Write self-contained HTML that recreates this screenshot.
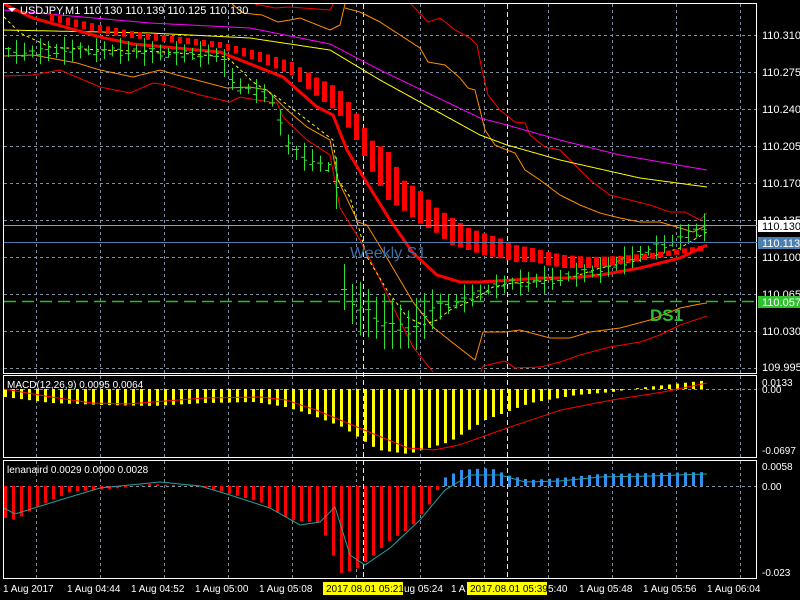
<!DOCTYPE html>
<html><head><meta charset="utf-8"><style>
html,body{margin:0;padding:0;background:#000;width:800px;height:600px;overflow:hidden}
svg{display:block}
text{font-family:"Liberation Sans",sans-serif;font-size:11px}
</style></head><body>
<svg id="s" width="800" height="600" xmlns="http://www.w3.org/2000/svg">
<rect width="800" height="600" fill="#000"/>
<g id="grid"></g>
<g id="plot"></g>
<rect x="3.5" y="3.5" width="753" height="370" fill="none" stroke="#fff"/>
<rect x="3.5" y="375.5" width="753" height="82" fill="none" stroke="#fff"/>
<rect x="3.5" y="460.5" width="753" height="118" fill="none" stroke="#fff"/>
<line x1="4" y1="225.5" x2="757" y2="225.5" stroke="#9a9a9a"/>
<line x1="4" y1="242.5" x2="757" y2="242.5" stroke="#4a7fb0"/>
<line x1="4" y1="301.5" x2="757" y2="301.5" stroke="#20c020" stroke-width="1.5" stroke-dasharray="12,6"/>
<text x="350" y="258" fill="#3a6fa8" style="font-size:16px">Weekly S1</text>
<text x="650" y="321" fill="#30c030" style="font-size:17px;font-weight:bold">DS1</text>
<path d="M8 8 L16 8 L12 12 Z" fill="#fff"/>
<text x="20" y="14" fill="#fff">USDJPY,M1  110.130 110.139 110.125 110.130</text>
<text x="7" y="388" fill="#fff" style="font-size:10px">MACD(12,26,9) 0.0095 0.0064</text>
<text x="7" y="473" fill="#fff" style="font-size:10px">lenanaird 0.0029 0.0000 0.0028</text>
<g fill="#fff">
<text x="762" y="39">110.310</text><text x="762" y="76">110.275</text><text x="762" y="113">110.240</text>
<text x="762" y="150">110.205</text><text x="762" y="187">110.170</text><text x="762" y="224">110.135</text>
<text x="762" y="261">110.100</text><text x="762" y="298">110.065</text><text x="762" y="335">110.030</text>
<text x="762" y="371">109.995</text>
<text x="762" y="386" style="font-size:10px">0.0133</text><text x="762" y="393" style="font-size:10px">0.00</text>
<text x="762" y="454" style="font-size:10px">-0.0697</text>
<text x="762" y="470" style="font-size:10px">0.0058</text><text x="762" y="490" style="font-size:10px">0.00</text>
<text x="762" y="576" style="font-size:10px">-0.023</text>
</g>
<rect x="758" y="220" width="42" height="12" fill="#fff"/><text x="762" y="230" fill="#000">110.130</text>
<rect x="758" y="237" width="42" height="12" fill="#4a7fb0"/><text x="762" y="247" fill="#fff">110.113</text>
<rect x="758" y="296" width="42" height="12" fill="#30c030"/><text x="762" y="306" fill="#fff">110.057</text>
<g fill="#fff">
<text x="3" y="592" style="font-size:10px">1 Aug 2017</text>
<text x="67" y="592" style="font-size:10px">1 Aug 04:44</text>
<text x="131" y="592" style="font-size:10px">1 Aug 04:52</text>
<text x="195" y="592" style="font-size:10px">1 Aug 05:00</text>
<text x="259" y="592" style="font-size:10px">1 Aug 05:08</text>
<text x="404" y="592" style="font-size:10px">ug 05:24</text>
<text x="451" y="592" style="font-size:10px">1 A</text>
<text x="548" y="592" style="font-size:10px">5:40</text>
<text x="579" y="592" style="font-size:10px">1 Aug 05:48</text>
<text x="643" y="592" style="font-size:10px">1 Aug 05:56</text>
<text x="707" y="592" style="font-size:10px">1 Aug 06:04</text>
</g>
<rect x="323" y="582" width="80" height="13" fill="#ffff00"/><text x="326" y="592" fill="#000" style="font-size:10px">2017.08.01 05:21</text>
<rect x="467" y="582" width="80" height="13" fill="#ffff00"/><text x="470" y="592" fill="#000" style="font-size:10px">2017.08.01 05:39</text>
</svg>
<script>
(function(){
var NS="http://www.w3.org/2000/svg",G=document.getElementById("grid"),P=document.getElementById("plot");
function el(p,n,a){var e=document.createElementNS(NS,n);for(var k in a)e.setAttribute(k,a[k]);p.appendChild(e);return e;}
function f(pts,x){for(var i=0;i<pts.length-1;i++){if(x<=pts[i+1][0]){var a=pts[i],b=pts[i+1];if(b[0]==a[0])return b[1];return a[1]+(b[1]-a[1])*(x-a[0])/(b[0]-a[0]);}}return pts[pts.length-1][1];}
function line(pts,c,w,d){var s=[];for(var x=pts[0][0];x<=pts[pts.length-1][0];x+=1)s.push(x+","+f(pts,x).toFixed(1));var a={points:s.join(" "),fill:"none",stroke:c,"stroke-width":w||1};if(d)a["stroke-dasharray"]=d;el(P,"polyline",a);}
var gs="#8090a0";
for(var x=36;x<757;x+=64){el(G,"line",{x1:x+.5,y1:4,x2:x+.5,y2:373,stroke:gs,"stroke-dasharray":"3,3"});el(G,"line",{x1:x+.5,y1:376,x2:x+.5,y2:457,stroke:gs,"stroke-dasharray":"3,3"});el(G,"line",{x1:x+.5,y1:461,x2:x+.5,y2:578,stroke:gs,"stroke-dasharray":"3,3"});}
for(var y=35;y<373;y+=37)el(G,"line",{x1:4,y1:y+.5,x2:757,y2:y+.5,stroke:gs,"stroke-dasharray":"3,3"});
el(G,"line",{x1:4,y1:389.5,x2:757,y2:389.5,stroke:gs,"stroke-dasharray":"3,3"});
el(G,"line",{x1:4,y1:486.5,x2:757,y2:486.5,stroke:gs,"stroke-dasharray":"3,3"});
[363,507].forEach(function(x){el(G,"line",{x1:x+.5,y1:4,x2:x+.5,y2:580,stroke:"#ffff00","stroke-dasharray":"5,3"});});
line([[232,4],[243,13],[262,15],[278,22],[290,20],[300,18],[330,30],[340,25],[345,4]],"#ff8c00",1);
line([[345,8],[360,12],[380,22],[400,35],[420,48],[428,62],[445,65],[460,78],[468,88],[475,90],[480,110],[485,130],[495,145],[507,150],[515,153],[525,170],[540,180],[560,195],[580,205],[600,213],[620,218],[640,222],[660,222],[680,228],[693,232],[707,225]],"#ff8c00",1);
line([[255,4],[275,8],[290,7],[330,10],[333,4]],"#ff0000",1);
line([[411,4],[428,22],[440,18],[455,30],[470,38],[477,45],[482,70],[488,95],[500,110],[515,122],[525,123],[530,135],[545,147],[560,150],[575,165],[590,180],[610,195],[630,200],[650,205],[670,212],[685,212],[700,220],[707,213]],"#ff0000",1);
line([[4,10],[150,23],[250,28],[330,44],[380,70],[480,118],[507,125],[560,140],[620,155],[707,170]],"#ff00ff",1);
line([[4,30],[150,33],[250,38],[330,50],[380,80],[480,135],[507,145],[560,160],[640,178],[707,187]],"#ffff00",1);
line([[4,56],[33,55],[77,63],[100,70],[133,77],[160,70],[177,75],[227,88],[250,87],[267,90],[277,100],[287,110],[307,127],[330,140],[338,180],[358,222],[367,225],[390,263],[413,302],[433,327],[453,343],[475,360],[483,332],[505,332],[520,330],[550,338],[570,338],[590,332],[620,328],[650,320],[680,308],[700,304],[707,303]],"#ff8c00",1);
line([[4,76],[33,75],[60,70],[100,87],[130,93],[153,83],[167,85],[200,95],[230,102],[240,97],[257,100],[277,103],[283,117],[307,140],[330,155],[340,208],[360,240],[377,273],[393,307],[413,347],[433,372]],"#ff0000",1);
line([[481,372],[483,366],[505,361],[515,368],[540,367],[560,362],[580,355],[610,347],[640,342],[660,335],[680,325],[707,316]],"#ff0000",1);
line([[4,17],[20,33],[50,47],[100,50],[167,52],[227,57],[253,82],[277,97],[333,140],[338,180],[350,197],[367,257],[387,290],[407,317],[423,325],[437,320],[450,310],[473,300],[493,287],[513,283],[533,282],[573,277],[600,268],[640,260],[680,248],[707,232]],"#ffff00",1,"3,3");
line([[4,4],[33,18],[100,37],[133,44],[220,52],[283,77],[317,107],[333,115],[347,150],[367,183],[390,220],[413,253],[437,275],[460,282],[480,282],[513,280],[540,278],[570,278],[600,275],[640,268],[680,258],[707,245]],"#ff0000",3);
function tp(x){return f([[52,14],[100,25],[132,31],[220,42],[260,52],[292,62],[315,77],[338,88],[355,112],[371,140],[388,152],[403,180],[419,190],[435,207],[452,218],[468,228],[483,233],[499,238],[515,245],[532,248],[548,252],[564,255],[590,257],[620,256],[650,253],[680,249],[707,245]],x);}
function bt(x){return f([[52,21],[100,33],[132,38],[220,48],[260,62],[292,75],[315,95],[338,113],[355,138],[371,170],[388,200],[403,210],[419,223],[435,232],[452,245],[468,250],[483,255],[499,258],[515,262],[532,262],[548,265],[564,268],[590,268],[620,264],[650,259],[680,254],[707,250]],x);}
for(var x=52;x<=707;x+=8){el(P,"rect",{x:x-2,y:tp(x),width:x>300?5:4,height:bt(x)-tp(x),fill:"#ff0000"});}
function mid(x){return f([[8,52],[100,50],[220,55],[235,85],[270,95],[290,150],[300,155],[335,170],[345,300],[380,320],[410,330],[430,310],[460,300],[500,285],[560,278],[600,270],[650,250],[707,226]],x);}
for(var x=8,i=0;x<=707;x+=8,i++){var m=mid(x),r=5+((i*37)%10);if(x>330&&x<440)r+=14;var o=m+((i*13)%9-4),c=m+((i*7)%9-4);
el(P,"line",{x1:x+.5,y1:m-r,x2:x+.5,y2:m+r,stroke:"#30e030"});el(P,"line",{x1:x-3,y1:o+.5,x2:x,y2:o+.5,stroke:"#30e030"});el(P,"line",{x1:x,y1:c+.5,x2:x+3,y2:c+.5,stroke:"#30e030"});}
function macd(x){return f([[5,397],[51,403],[102,405],[153,406],[204,403],[255,402],[285,407],[306,413],[342,427],[378,450],[408,454],[449,442],[485,420],[530,403],[576,395],[612,392],[630,389],[638,388],[709,380]],x);}
for(var x=5;x<=707;x+=8){var v=macd(x);if(v>389)el(P,"rect",{x:x-1,y:389,width:3,height:v-389,fill:"#ffff00"});else el(P,"rect",{x:x-1,y:v,width:3,height:389-v,fill:"#ffff00"});}
line([[4,389],[51,397],[92,403],[128,404],[204,398],[260,397],[286,400],[316,410],[357,427],[408,448],[434,450],[459,445],[510,427],[561,410],[612,400],[663,392],[707,383]],"#ff0000",1);
function lena(x){return f([[5,518],[15,520],[40,505],[70,492],[120,488],[150,484],[200,486],[230,494],[260,502],[290,520],[320,523],[340,573],[355,570],[370,558],[390,540],[410,528],[435,497],[440,480],[460,470],[490,468],[510,476],[530,480],[560,478],[600,474],[650,473],[707,472]],x);}
for(var x=5;x<=707;x+=8){var v=lena(x),c=x<440?"#ff0000":"#3090f0";if(v>486)el(P,"rect",{x:x-1,y:486,width:3,height:v-486,fill:c});else el(P,"rect",{x:x-1,y:v,width:3,height:486-v,fill:c});}
line([[4,508],[15,514],[60,500],[100,488],[160,482],[200,486],[230,495],[270,508],[300,525],[320,522],[335,507],[350,555],[365,565],[390,548],[420,520],[445,490],[470,475],[500,475],[525,482],[560,481],[600,477],[650,476],[707,474]],"#2aa0a0",1);
})();
</script>
</body></html>
